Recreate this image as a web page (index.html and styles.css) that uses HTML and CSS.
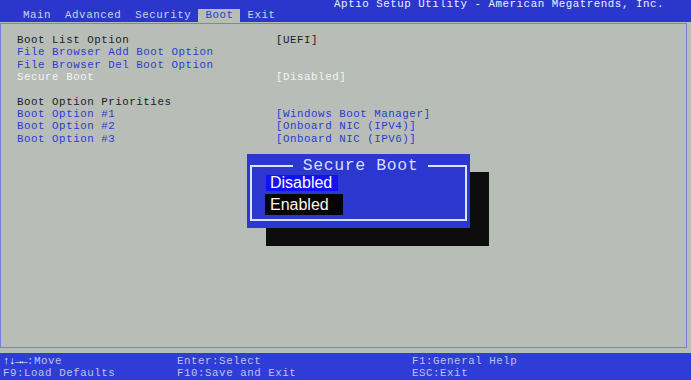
FILE: index.html
```html
<!DOCTYPE html>
<html lang="en">
  <head>
    <meta charset="UTF-8" />
    <meta name="viewport" content="width=device-width, initial-scale=1.0" />
    <title>Aptio Setup Utility</title>
    <link rel="stylesheet" href="styles.css">
  </head>
  <body>
    <div class="topbar">
      <div class="title">Aptio Setup Utility - American Megatrends, Inc.</div>
      <div class="tabs">
        <span class="tab">Main</span>
        <span class="tab">Advanced</span>
        <span class="tab">Security</span>
        <span class="tab active">Boot</span>
        <span class="tab">Exit</span>
      </div>
    </div>

    <div class="main">
      <div class="frame">
        <div class="rows">
          <span class="label">Boot List Option</span><span class="label">[UEFI]</span>
          <span class="link">File Browser Add Boot Option</span><span></span>
          <span class="link">File Browser Del Boot Option</span><span></span>
          <span class="selected">Secure Boot</span><span class="selected">[Disabled]</span>
          <span class="blank"></span><span class="blank"></span>
          <span class="label">Boot Option Priorities</span><span></span>
          <span class="link">Boot Option #1</span><span class="link">[Windows Boot Manager]</span>
          <span class="link">Boot Option #2</span><span class="link">[Onboard NIC (IPV4)]</span>
          <span class="link">Boot Option #3</span><span class="link">[Onboard NIC (IPV6)]</span>
        </div>
      </div>
    </div>

    <div class="helpbar">
      <span><b class="arrows">&uarr;&darr;&rarr;&larr;</b>:Move</span>
      <span>Enter:Select</span>
      <span>F1:General Help</span>
      <span>F9:Load Defaults</span>
      <span>F10:Save and Exit</span>
      <span>ESC:Exit</span>
    </div>

    <div class="popup">
      <fieldset class="popup-box">
        <legend>Secure Boot</legend>
        <div class="choice choice-on">Disabled</div>
        <div class="choice choice-cur">Enabled</div>
      </fieldset>
    </div>
  </body>
</html>
```

FILE: styles.css
```css
body {
  margin: 0;
  width: 691px;
  height: 380px;
  display: flex;
  flex-direction: column;
  background-color: #b8bdb7;
  font-family: "Liberation Mono", "DejaVu Sans Mono", monospace;
  font-size: 10.8px;
  letter-spacing: 0.54px;
  overflow: hidden;
  position: relative;
}
.topbar {
  height: 22px;
  background-color: #2b37cc;
  display: flex;
  flex-direction: column;
}
.title {
  height: 9px;
  line-height: 9px;
  text-align: right;
  padding-right: 27px;
  color: #eef0ff;
}
.tabs {
  display: flex;
  height: 13px;
  line-height: 13px;
  padding-left: 16px;
}
.tab {
  padding: 0 7px;
  color: #ccd2f0;
}
.tab.active {
  background-color: #b8bdb7;
  color: #2b3bd0;
}
.main {
  flex: 1;
  padding: 1px 4px 5px 0;
  display: flex;
}
.frame {
  flex: 1;
  border: 1px solid #7282dc;
  padding: 10px 0 0 16px;
}
.rows {
  display: grid;
  grid-template-columns: 259px 1fr;
  grid-auto-rows: 12.35px;
  line-height: 12.35px;
  white-space: pre;
}
.label {
  color: #161d2a;
}
.link {
  color: #2b3bd0;
}
.selected {
  color: #f4f5f4;
}
.helpbar {
  height: 27px;
  box-sizing: border-box;
  padding: 1.5px 0 0 3px;
  background-color: #2e3dd6;
  color: #bcc3f0;
  display: grid;
  grid-template-columns: 174px 235px 1fr;
  grid-auto-rows: 12.5px;
  line-height: 12.5px;
}
.arrows {
  color: #ffffff;
  font-weight: bold;
  letter-spacing: -0.5px;
}
.popup {
  position: absolute;
  left: 247px;
  top: 154px;
  width: 223px;
  height: 74px;
  box-sizing: border-box;
  padding: 3px 3px 0 3px;
  background-color: #2b37cf;
  box-shadow: 19px 18px 0 #0d0d0d;
}
.popup-box {
  margin: 0;
  min-width: 0;
  padding: 0 10px 4px 14px;
  border: 2px solid #dfe2ff;
}
.popup-box legend {
  margin: 0 auto;
  padding: 0 10px;
  font-size: 16.5px;
  letter-spacing: 0.6px;
  line-height: 18px;
  color: #d8dcff;
}
.choice {
  font-family: "Liberation Sans", Arial, sans-serif;
  font-size: 16px;
  letter-spacing: 0;
  color: #ffffff;
  display: table;
}
.choice-on {
  height: 16px;
  line-height: 16px;
  padding: 0 6px 0 4px;
  margin-bottom: 3px;
  background-color: #1212f2;
}
.choice-cur {
  height: 21px;
  line-height: 21px;
  padding: 0 14px 0 5px;
  margin-left: -1px;
  background-color: #050505;
  color: #fff8e6;
}
```
